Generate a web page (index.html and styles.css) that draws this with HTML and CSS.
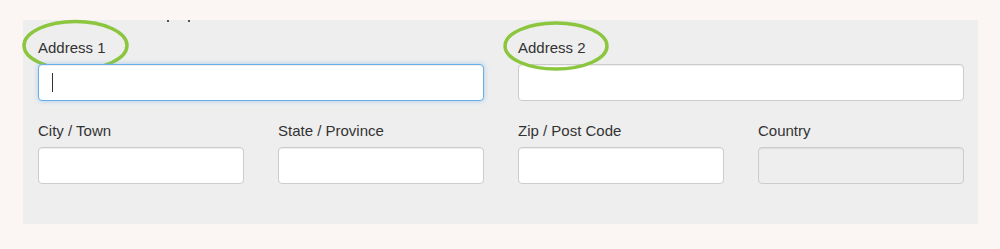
FILE: index.html
```html
<!DOCTYPE html>
<html lang="en">
<head>
<meta charset="UTF-8">
<meta name="viewport" content="width=device-width, initial-scale=1.0">
<title>Address Form</title>
<link rel="stylesheet" href="styles.css">
</head>
<body>
<div class="panel">
    <span class="cut-dot dot-a"></span>
    <span class="cut-dot dot-b"></span>
    <div class="form-grid">
        <div class="field wide">
            <label class="labelTxt" for="address1">Address 1</label>
            <svg class="circle circle-a" width="107" height="53" viewBox="0 0 107 53">
                <ellipse cx="53.5" cy="26.5" rx="51.5" ry="24" fill="none" stroke="#8cc63f" stroke-width="3.5"/>
            </svg>
            <div class="input-wrap">
                <input type="text" id="address1" class="box focused">
                <span class="caret"></span>
            </div>
        </div>
        <div class="field wide">
            <label class="labelTxt" for="address2">Address 2</label>
            <svg class="circle circle-b" width="106" height="50" viewBox="0 0 106 50">
                <ellipse cx="53" cy="25" rx="51" ry="23" fill="none" stroke="#8cc63f" stroke-width="3.5"/>
            </svg>
            <input type="text" id="address2" class="box">
        </div>
        <div class="field">
            <label class="labelTxt" for="city">City / Town</label>
            <input type="text" id="city" class="box">
        </div>
        <div class="field">
            <label class="labelTxt" for="state">State / Province</label>
            <input type="text" id="state" class="box">
        </div>
        <div class="field">
            <label class="labelTxt" for="zip">Zip / Post Code</label>
            <input type="text" id="zip" class="box">
        </div>
        <div class="field">
            <label class="labelTxt" for="country">Country</label>
            <input type="text" id="country" class="box" disabled>
        </div>
    </div>
</div>
</body>
</html>
```
FILE: styles.css
```css
    body, html {
        margin: 0;
        background-color: #fbf5f4;
        font-family: "Liberation Sans", Arial, sans-serif;
    }
    .panel {
        position: relative;
        width: 926px;
        margin: 20px 0 0 23px;
        padding: 18px 14px 40px 15px;
        background-color: #eeeeee;
    }
    .cut-dot {
        position: absolute;
        top: 0;
        width: 2px;
        height: 2px;
        background-color: #555;
    }
    .dot-a {
        left: 144px;
    }
    .dot-b {
        left: 165px;
    }
    .form-grid {
        display: grid;
        grid-template-columns: repeat(4, 206px);
        column-gap: 34px;
        row-gap: 20px;
    }
    .field {
        position: relative;
        display: flex;
        flex-direction: column;
    }
    .wide {
        grid-column: span 2;
    }
    .labelTxt {
        font-size: 15px;
        line-height: 20px;
        color: #333;
        margin-bottom: 6px;
    }
    .box {
        box-sizing: border-box;
        width: 100%;
        height: 37px;
        margin: 0;
        border: 1px solid #cccccc;
        border-radius: 4px;
        background-color: #fff;
        box-shadow: inset 0 1px 1px rgba(0, 0, 0, 0.075);
        outline: none;
    }
    .box:disabled {
        background-color: #eeeeee;
    }
    .focused {
        border-color: #66afe9;
        box-shadow: inset 0 1px 1px rgba(0, 0, 0, 0.075), 0 0 5px rgba(102, 175, 233, 0.5);
    }
    .input-wrap {
        position: relative;
    }
    .caret {
        position: absolute;
        left: 14px;
        top: 9px;
        width: 1px;
        height: 19px;
        background-color: #333;
    }
    .circle {
        position: absolute;
        pointer-events: none;
    }
    .circle-a {
        left: -16px;
        top: -19px;
    }
    .circle-b {
        left: -15px;
        top: -17px;
    }
```
